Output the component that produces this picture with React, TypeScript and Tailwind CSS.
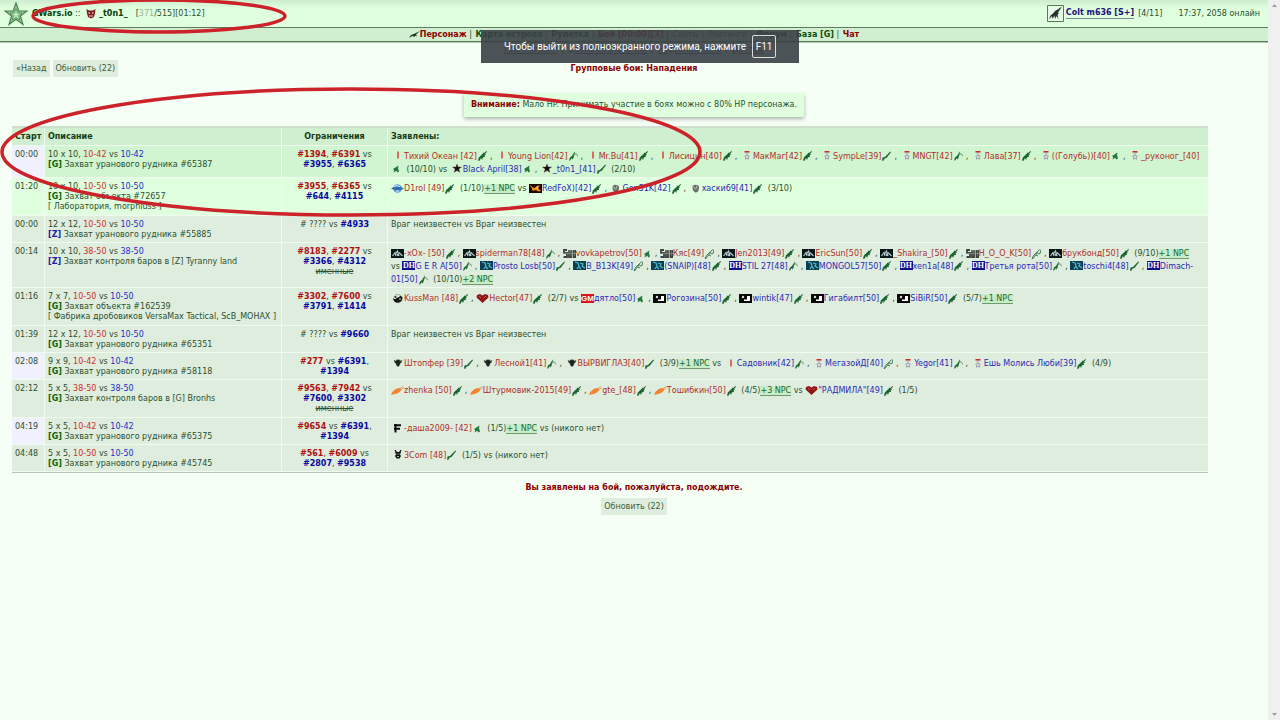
import { Fragment } from 'react';

type Side = 'r' | 'b';
type Player = [side: Side, clan: string, name: string, gun?: string];
type Item = string | Player;

type Battle = {
  time: string;
  soon?: boolean;
  size: string;
  levels: string;
  land: 'G' | 'Z';
  target: string;
  extra?: string;
  limits: string[][];
  named?: boolean;
  lines: Item[][];
  bg: string;
  height?: string;
};

const plain = 'bg-[#dfeddf]';

const battles: Battle[] = [
  {
    time: '00:00', soon: true, size: '10 x 10', levels: '10-42', land: 'G', target: 'Захват уранового рудника #65387',
    limits: [['r#1394', ', ', 'r#6391', ' vs'], ['b#3955', ', ', 'b#6365']],
    bg: 'bg-[#d0f5d0]',
    lines: [
      [
        ['r', 'bar', 'Тихий Океан [42]', 'rifle'], ['r', 'bar', 'Young Lion[42]', 'mg'], ['r', 'bar', 'Mr.Bu[41]', 'rifle'],
        ['r', 'bar', 'Лисицин[40]', 'rifle'], ['r', 'medal', 'МакМаг[42]', 'rifle'], ['r', 'medal', 'SympLe[39]', 'tube'],
        ['r', 'medal', 'MNGT[42]', 'mg'], ['r', 'medal', 'Лава[37]', 'rifle'], ['r', 'medal', '((Голубь))[40]', 'smg'],
        ['r', 'medal', '_руконог_[40]'],
      ],
      [['r', '', '', 'smg'], '(10/10) vs ', ['b', 'star', 'Black April[38]', 'smg'], ['b', 'star', '_t0n1_[41]', 'tube'], '(2/10)'],
    ],
  },
  {
    time: '01:20', size: '10 x 10', levels: '10-50', land: 'G', target: 'Захват объекта #72657', extra: '[ Лаборатория, morphiuss ]',
    limits: [['r#3955', ', ', 'r#6365', ' vs'], ['b#644', ', ', 'b#4115']],
    bg: 'bg-[#dfffdf]', height: 'h-[38px]',
    lines: [[
      ['r', 'globe', 'D1rol [49]', 'rifle'], '(1/10)', '+1 NPC', ' vs ', ['b', 'fire', 'RedFoX)[42]', 'rifle'],
      ['b', 'stone', 'Gen51K[42]', 'rifle'], ['b', 'stone', 'хаски69[41]', 'rifle'], '(3/10)',
    ]],
  },
  {
    time: '00:00', size: '12 x 12', levels: '10-50', land: 'Z', target: 'Захват уранового рудника #55885',
    limits: [['# ???? vs ', 'b#4933']],
    bg: plain,
    lines: [],
  },
  {
    time: '00:14', size: '10 x 10', levels: '38-50', land: 'Z', target: 'Захват контроля баров в [Z] Tyranny land',
    limits: [['r#8183', ', ', 'r#2277', ' vs'], ['b#3366', ', ', 'b#4312']], named: true,
    bg: plain,
    lines: [
      [
        ['r', 'wolf', '-xOx- [50]', 'rifle'], ['r', 'wolf', 'spiderman78[48]', 'mg'], ['r', 'su', 'vovkapetrov[50]', 'smg'],
        ['r', 'su', 'Кяс[49]', 'flamer'], ['r', 'wolf', 'Jen2013[49]', 'rifle'], ['r', 'wolf', 'EricSun[50]', 'rifle'],
        ['r', 'wolf', '_Shakira_[50]', 'rifle'], ['r', 'su', 'H_O_O_K[50]', 'flamer'], ['r', 'wolf', 'брукбонд[50]', 'rifle'],
        '(9/10)', '+1 NPC',
      ],
      [
        'vs ', ['b', 'dh', 'G E R A[50]', 'mg'], ['b', 'teal', 'Prosto Losb[50]', 'tube'], ['b', 'teal', 'B_B13K[49]', 'flamer'],
        ['b', 'teal', '(SNAIP)[48]', 'rifle'], ['b', 'dh', 'STIL 27[48]', 'mg'], ['b', 'teal', 'MONGOL57[50]', 'rifle'],
        ['b', 'dh', 'xen1a[48]', 'rifle'], ['b', 'dh', 'Третья рота[50]', 'mg'], ['b', 'teal', 'toschi4[48]', 'tube'],
        ['b', 'dh', 'Dimach-'],
      ],
      [['b', '', '01[50]', 'mg'], '(10/10)', '+2 NPC'],
    ],
  },
  {
    time: '01:16', size: '7 x 7', levels: '10-50', land: 'G', target: 'Захват объекта #162539',
    extra: '[ Фабрика дробовиков VersaMax Tactical, ScB_MOHAX ]',
    limits: [['r#3302', ', ', 'r#7600', ' vs'], ['b#3791', ', ', 'b#1414']],
    bg: plain, height: 'h-[38px]',
    lines: [[
      ['r', 'yin', 'KussMan [48]', 'rifle'], ['r', 'heart', 'Hector[47]', 'rifle'], '(2/7) vs ', ['b', 'gm', 'дятло[50]', 'smg'],
      ['b', 'moon', 'Рогозина[50]', 'rifle'], ['b', 'moon', 'wintik[47]', 'rifle'], ['b', 'moon', 'Гигабилт[50]', 'rifle'],
      ['b', 'moon', 'SiBiR[50]', 'rifle'], '(5/7)', '+1 NPC',
    ]],
  },
  {
    time: '01:39', size: '12 x 12', levels: '10-50', land: 'G', target: 'Захват уранового рудника #65351',
    limits: [['# ???? vs ', 'b#9660']],
    bg: plain,
    lines: [],
  },
  {
    time: '02:08', soon: true, size: '9 x 9', levels: '10-42', land: 'G', target: 'Захват уранового рудника #58118',
    limits: [['r#277', ' vs ', 'b#6391', ','], ['b#1394']],
    bg: plain,
    lines: [[
      ['r', 'mask', 'Штопфер [39]', 'tube'], ['r', 'mask', 'Лесной1[41]', 'mg'], ['r', 'mask', 'ВЫРВИГЛАЗ[40]', 'tube'],
      '(3/9)', '+1 NPC', ' vs ', ['b', 'bar', 'Садовник[42]', 'mg'], ['b', 'medal', 'МегазойД[40]', 'flamer'],
      ['b', 'medal', 'Yegor[41]', 'mg'], ['b', 'medal', 'Ешь Молись Люби[39]', 'rifle'], '(4/9)',
    ]],
  },
  {
    time: '02:12', size: '5 x 5', levels: '38-50', land: 'G', target: 'Захват контроля баров в [G] Bronhs',
    limits: [['r#9563', ', ', 'r#7942', ' vs'], ['b#7600', ', ', 'b#3302']], named: true,
    bg: plain, height: 'h-[38px]',
    lines: [[
      ['r', 'carrot', 'zhenka [50]', 'rifle'], ['r', 'carrot', 'Штурмовик-2015[49]', 'rifle'], ['r', 'carrot', 'gte_[48]', 'rifle'],
      ['r', 'carrot', 'Тошибкин[50]', 'rifle'], '(4/5)', '+3 NPC', ' vs ', ['b', 'heart', '"РАДМИЛА"[49]', 'rifle'], '(1/5)',
    ]],
  },
  {
    time: '04:19', soon: true, size: '5 x 5', levels: '10-42', land: 'G', target: 'Захват уранового рудника #65375',
    limits: [['r#9654', ' vs ', 'b#6391', ','], ['b#1394']],
    bg: plain,
    lines: [[['r', 'flag', '-даша2009- [42]', 'smg'], '(1/5)', '+1 NPC', ' vs (никого нет)']],
  },
  {
    time: '04:48', size: '5 x 5', levels: '10-50', land: 'G', target: 'Захват уранового рудника #45745',
    limits: [['r#561', ', ', 'r#6009', ' vs'], ['b#2807', ', ', 'b#9538']],
    bg: plain,
    lines: [[['r', 'skull', '3Com [48]', 'tube'], '(1/5) vs (никого нет)']],
  },
];

const clanArt: Record<string, React.ReactNode> = {
  bar: <path d="M7 .5v7" stroke="#e23b3b" strokeWidth="1.500" />,
  medal: (
    <>
      <path d="M4.500.8h5" stroke="#c22" strokeWidth="1.500" />
      <path d="M5.500 2.300h3" stroke="#aab" strokeWidth=".8" />
      <path d="M7 3.400l.6 1.500 1.900.2-1.300 1.200.4 1.900L7 7.300l-1.600.9.4-1.900-1.300-1.200 1.900-.2z" fill="#e6e0ec" stroke="#778" strokeWidth=".6" />
    </>
  ),
  star: (
    <path d="M7 0l1.100 3h3.400L8.800 5l1 3.300L7 6.500 4.200 8.300l1-3.300L2.500 3h3.400z" fill="#111" stroke="#633" strokeWidth=".4" />
  ),
  globe: (
    <>
      <ellipse cx="6.500" cy="4.500" rx="4.500" ry="4.200" fill="#5aa2da" />
      <path d="M0 4.500c3-2.500 9-2.500 13 0-3 2-9 2-13 0z" fill="#2f6cab" />
      <path d="M3 2.800c2-1.500 5-1 6 0M5 7h3" stroke="#d8ecf9" fill="none" />
    </>
  ),
  fire: (
    <>
      <path d="M0 0h13v9H0z" fill="#160800" />
      <path d="M1 1c2 1 3 3 5 3 1-2 3-3 5-2l-2 2 3 3c-3 1-4 0-5-1-2 1-4 1-4-1S1 3 1 1z" fill="#f08a1c" />
      <path d="M6 4l3-1 0 2z" fill="#ffd84a" />
    </>
  ),
  stone: (
    <>
      <path d="M3.500 3c0-3 6.500-3 6.500 0 0 3-1 5.500-3 5.500S3.500 6 3.500 3z" fill="#667066" />
      <path d="M4.500 2.500l2 3M8 1.500L7 5" stroke="#b9c2b9" />
    </>
  ),
  wolf: (
    <>
      <path d="M0 0h13v9H0z" fill="#081616" />
      <path d="M1.500 7L4 3.500 5 7M5 4.500L6.500 2l1.500 5M8 3.500L11.500 7M6 5l1 2" fill="none" stroke="#b4caca" strokeWidth="1.200" />
    </>
  ),
  su: (
    <>
      <path d="M4 1H1v3h3v4H.5M6 1v7h2V1M10.500 1v7h2V1" fill="none" stroke="#3f443f" strokeWidth="1.800" />
      <path d="M0 4.500h13M5 2h5" stroke="#8b938b" strokeWidth=".8" />
    </>
  ),
  teal: (
    <>
      <path d="M0 0h13v9H0z" fill="#0d3f52" />
      <path d="M2 1l3 1 1 3-2 3M7 2l3 1-1 2 3 2M6 6l2 2" fill="none" stroke="#4cb9c8" strokeWidth="1.300" />
    </>
  ),
  yin: (
    <>
      <path d="M2 3.500c0 7 9.500 7 9.500 0-.5-1-1.500-1.500-2.500-1.500C8 4 6 3 5 4.500 4 5.500 2.500 5 2 3.500z" fill="#151515" />
      <path d="M3 3c1-3 6-3.300 7.500-.5" stroke="#777" fill="none" strokeWidth=".7" />
      <circle cx="4.500" cy="3" r="1" fill="#222" />
      <circle cx="9" cy="5" r=".8" fill="#eee" />
    </>
  ),
  heart: (
    <>
      <path d="M6.500 9L.5 3.500 1 1l3-1 2.500 1.500L9 0l3 1 .5 2.500z" fill="#8e1717" />
      <path d="M3 2l2 2M10 2L8 4" stroke="#d85050" />
    </>
  ),
  moon: (
    <>
      <path d="M0 0h13v9H0z" fill="#080808" />
      <path d="M8 2h3v5H5V5.500h3z" fill="#fff" />
      <circle cx="4" cy="3" r="1.200" fill="#ddd" />
    </>
  ),
  mask: (
    <path d="M3 1l1.800 1L5.500.8h3L9.200 2 11 1l-.6 2.500-1.200.8-.7 2.200L7 7.800 5.500 6.500 4.800 4.300l-1.200-.8z" fill="#1a241a" stroke="#6b7b6b" strokeWidth=".4" />
  ),
  carrot: (
    <>
      <path d="M0 8.500c1-3 4.500-6.500 9-6.500l1.500 1.500C9 6.500 5 8.500 0 8.500z" fill="#f5822c" />
      <path d="M9 2.500l3-2M10 3.500l3-2" stroke="#d0a070" strokeWidth=".8" />
    </>
  ),
  flag: <path d="M3 1.200h7M3 4.700h6M4.500 0v8.500" stroke="#0c0c0c" strokeWidth="2" fill="none" />,
  skull: (
    <>
      <path d="M4 0l1.500 2.500M10 0L8.500 2.500" stroke="#111" strokeWidth="1.300" />
      <path d="M4 2h6L9 4.500l1 1.500-1.500 2.500h-3L4 6l1-1.500z" fill="#111" />
      <path d="M5.500 4h1M7.500 4h1M6 6.500h2" stroke="#dfeddf" strokeWidth=".8" />
    </>
  ),
};

const gunArt: Record<string, React.ReactNode> = {
  rifle: <path d="M1 9.800l.8-3.300 2-2L5.500 3l1-1.500L7.200 2 9.500 0l.5.700-2 2.300 1 .6-1.500 1 .5 1.400-2 .3L5 9 4 7 2.500 9.800z" fill="#1b6630" />,
  mg: (
    <>
      <path d="M1 9.500l1-3L4 5l2.800-4.500.2.500-1 4L4.800 8.800 4 7 2 9.500z" fill="#1b6630" />
      <path d="M5.500 4.500L8 2.500 10 5.500" stroke="#5d9068" fill="none" strokeWidth=".9" />
    </>
  ),
  tube: <path d="M1 9.800l.5-3.300L4 6l5.300-5.500.7.800L5.500 7 3.700 7.500 2.300 9.800z" fill="#1b6630" />,
  smg: <path d="M2 5l5.500-3.500L7 4l1 3.500-1.700 1L5.300 6.800 2.500 8.500l.7-2.300z" fill="#267a3c" />,
  flamer: (
    <path d="M1 9.500l2-3.500L8.500.8 10 1.500 9 4.500l-1.500.5-1-1.500L3.500 7.500 2 9.500zM5 6l2 1" fill="none" stroke="#41794e" strokeWidth="1" />
  ),
};

function ClanIcon({ clan }: { clan: string }) {
  if (clan === 'dh' || clan === 'gm') {
    return (
      <span
        className={`inline-block w-[13px] h-[9px] overflow-hidden align-bottom mb-[3px] text-center font-bold text-[8px] leading-[9px] text-white ${
          clan === 'dh' ? "bg-[#10108c] font-['Liberation_Serif',serif]" : "bg-[#d81818] font-['Liberation_Sans',sans-serif]"
        }`}
      >
        {clan.toUpperCase()}
      </span>
    );
  }
  return (
    <svg viewBox="0 0 13 9" className="inline-block w-[13px] h-[9px] align-bottom mb-[3px]">
      {clanArt[clan]}
    </svg>
  );
}

function Line({ items }: { items: Item[] }) {
  return (
    <div className="h-[13px]">
      {items.map((item, i) => {
        if (typeof item === 'string') {
          return item.startsWith('+') ? (
            <a key={i} href="#npc" className="bg-[#c8ebc8] text-[#1c6a2c] border-b border-[#6f9a6f]">{item}</a>
          ) : (
            <Fragment key={i}>{item}</Fragment>
          );
        }
        const [side, clan, name, gun] = item;
        return (
          <Fragment key={i}>
            {clan && <ClanIcon clan={clan} />}
            {name && <a href="#player" className={side === 'r' ? 'text-[#b03028]' : 'text-[#2a2ab4]'}>{name}</a>}
            {gun && (
              <svg viewBox="0 0 10 10" className="inline-block w-[10px] h-[10px] align-bottom mb-[2px] mr-[3px]">{gunArt[gun]}</svg>
            )}
            {gun && (Array.isArray(items[i + 1]) ? ', ' : ' ')}
          </Fragment>
        );
      })}
    </div>
  );
}

const nav = [
  ['Персонаж', 'text-[#8b0000]'],
  ['Карта острова', 'text-[#0a500a]'],
  ['Рулетка', 'text-[#0a500a]'],
  ['Бой [00:00][3]', 'text-[#c00000]'],
  ['Сайты', 'text-[#3c6a3c] font-normal'],
  ['Рейтинги', 'text-[#3c6a3c] font-normal'],
  ['Форум', 'text-[#0a500a]'],
  ['База [G]', 'text-[#0a500a]'],
  ['Чат', 'text-[#8b0000]'],
];

const cell = 'border border-[#f0fbf0] border-l-0 border-t-0 px-[3px] pt-1 align-top';
const button = 'bg-[#dfeddf] text-[#3a613a] h-[17px] px-[3px]';

export default function App() {
  return (
    <div className="relative flex min-h-screen overflow-hidden bg-[#f5fff5] font-['DejaVu_Sans',Verdana,sans-serif] text-[8px] leading-[10px] text-[#2c502c]">
      <div className="flex-1 min-w-0">
        {/* Header */}
        <header className="flex h-[27px] items-center justify-between bg-linear-to-b from-[#cdebcd] to-[#dfffdf] to-30% pl-1 pr-2">
          <div className="flex items-center whitespace-pre">
            <svg viewBox="0 0 24 24" className="w-6 h-6 mr-1">
              <path d="M12 1l2.800 8H23l-6.600 5 2.600 8.500-7-5.200-7 5.200L7.600 14 1 9h8.200z" fill="#8fca8f" stroke="#4d8050" strokeWidth="1.200" />
              <path d="M12 6.500l1.600 4.500h4.400l-3.500 2.700 1.300 4.600-3.800-2.800-3.800 2.800 1.300-4.600L6 11h4.400z" fill="#b9e6b9" stroke="#5c9460" strokeWidth=".9" />
            </svg>
            <a href="#home" className="font-bold text-[#0a400a]">GWars.io</a>
            <span> :: </span>
            <svg viewBox="0 0 10 10" className="w-[10px] h-[10px] mx-[3px]">
              <path d="M.5 0L3 1.500h4L9.500 0 9 4.500 8 8 5 9.500 2 8 1 4.500z" fill="#7e1c1c" />
              <path d="M2.500 3.500l1.500 1M7.500 3.500l-1.500 1M3 7h4" stroke="#f4caca" strokeWidth="1.200" />
            </svg>
            <a href="#me" className="mr-[3px] font-bold text-[#0a400a]">_t0n1_</a>
            <span>  [<span className="text-[#9ab29a]">371</span>/515][01:12]</span>
          </div>
          <div className="flex items-center">
            <svg viewBox="0 0 17 17" className="w-[17px] h-[17px] mr-[2px]">
              <path d="M.5.500h16v16H.5z" fill="#e8fbe8" stroke="#587858" />
              <path d="M2 14.500l1.500-4 2.500-2L8 6l2.500-1.500L15 1.500 12 6l-1 2 1 1-1.500.5 1 4.500-2-3-1.500 3-.5-3.500L5.500 14 5 11z" fill="#26362a" />
            </svg>
            <a href="#weapon" className="font-bold text-[#24107c] border-b border-[#7c8c9c]">Colt m636 [S+]</a>
            <span className="ml-1 mr-4">[4/11]</span>
            <span>17:37, 2058 онлайн</span>
          </div>
        </header>

        {/* Navigation */}
        <nav className="flex h-[15px] items-center justify-center whitespace-pre border-y border-[#5d7d5d] bg-[#d0eed0] font-bold">
          <svg viewBox="0 0 11 8" className="w-[11px] h-2">
            <path d="M0 7l2-3 3-1 6-3-4 3.500 1 2-2-1-1 2-1-2z" fill="#182818" />
          </svg>
          {nav.map(([label, color], i) => (
            <Fragment key={label}>
              {i > 0 && <span className="mr-px font-normal"> | </span>}
              <a href="#nav" className={color}>{label}</a>
            </Fragment>
          ))}
        </nav>
        <div className="flex h-[18px] items-center justify-center gap-1 border-t border-[#b4c8b4] pb-1 text-[#55558c]">
          <a href="#shop" className="underline">Гос. магазин</a>|
          <a href="#board" className="underline">Доска объявлений</a>|
          <a href="#real" className="underline">Недвижимость</a>|
          <a href="#center" className="underline text-[#8c4040]">Центры</a>
        </div>

        {/* Title row */}
        <div className="grid grid-cols-[1fr_auto_1fr] items-center pl-[13px]">
          <div className="flex gap-[3px]">
            <button className={button}>«Назад</button>
            <button className={button}>Обновить (22)</button>
          </div>
          <h1 className="pr-[13px] font-bold text-[#8b0000]">Групповые бои: Нападения</h1>
        </div>

        <div className="mx-auto mt-4 w-fit bg-[#dfffdf] px-[7px] py-[7px] shadow-[0_2px_4px_rgba(0,0,0,0.3)]">
          <b className="text-[#8b0000]">Внимание:</b> Мало HP. Принимать участие в боях можно с 80% HP персонажа.
        </div>

        {/* Battles */}
        <div className="mt-[9px] pl-3 pr-[60px]">
          <table className="w-full table-fixed border-separate border-spacing-0 border-t-2 border-b border-t-[#cde0cd] border-b-[#b4c8b4]">
            <colgroup>
              <col className="w-[33px]" />
              <col className="w-[237px]" />
              <col className="w-[106px]" />
              <col />
            </colgroup>
            <thead>
              <tr className="h-[18px] bg-[#d0eed0] text-left text-[#143c14]">
                <th className="border-b border-r border-[#f0fbf0] px-[3px]">Старт</th>
                <th className="border-b border-r border-[#f0fbf0] px-[3px]">Описание</th>
                <th className="border-b border-r border-[#f0fbf0] px-[3px] text-center">Ограничения</th>
                <th className="border-b border-[#f0fbf0] px-[3px]">Заявлены:</th>
              </tr>
            </thead>
            <tbody>
              {battles.map(b => (
                <tr key={b.time + b.target} className={`${b.bg} ${b.height ?? 'h-[27px]'}`}>
                  <td className={`${cell} ${b.soon ? 'bg-[#f0f0ff]' : ''}`}>{b.time}</td>
                  <td className={`${cell} whitespace-nowrap`}>
                    {b.size}, <span className="text-[#d03028]">{b.levels}</span> vs <span className="text-[#1c30c8]">{b.levels}</span>
                    <br />
                    <b className={b.land === 'G' ? 'text-[#0a640a]' : 'text-[#1c1ca0]'}>[{b.land}]</b> {b.target}
                    {b.extra && <div>{b.extra}</div>}
                  </td>
                  <td className={`${cell} whitespace-pre text-center`}>
                    {b.limits.map((line, i) => (
                      <div key={i}>
                        {line.map((part, j) =>
                          /^[rb]#/.test(part) ? (
                            <a key={j} href="#syndicate" className={`font-bold ${part[0] === 'r' ? 'text-[#b01010]' : 'text-[#0808a0]'}`}>
                              {part.slice(1)}
                            </a>
                          ) : (
                            <Fragment key={j}>{part}</Fragment>
                          )
                        )}
                      </div>
                    ))}
                    {b.named && <s>именные</s>}
                  </td>
                  <td className={`${cell} border-r-0 whitespace-pre ${b.lines.length > 1 ? 'pb-px' : ''}`}>
                    {b.lines.length > 0 ? (
                      <div className="leading-[13px]">
                        {b.lines.map((items, i) => <Line key={i} items={items} />)}
                      </div>
                    ) : (
                      'Враг неизвестен vs Враг неизвестен'
                    )}
                  </td>
                </tr>
              ))}
            </tbody>
          </table>
        </div>

        <div className="mt-[10px] flex flex-col items-center gap-[5px]">
          <p className="font-bold text-[#8b0000]">Вы заявлены на бой, пожалуйста, подождите.</p>
          <button className={button}>Обновить (22)</button>
        </div>
      </div>

      {/* Scrollbar */}
      <div className="flex w-3 shrink-0 flex-col items-center justify-between bg-[#f0f0f0] py-1">
        <svg viewBox="0 0 5 3" className="w-[5px] h-[3px]"><path d="M0 3l2.500-3L5 3z" fill="#a0a0a0" /></svg>
        <svg viewBox="0 0 5 3" className="w-[5px] h-[3px]"><path d="M0 0l2.500 3L5 0z" fill="#a0a0a0" /></svg>
      </div>

      {/* Fullscreen hint */}
      <div className="absolute left-1/2 top-[30px] flex h-[33px] w-[318px] -translate-x-1/2 items-center justify-center gap-[6px] whitespace-nowrap bg-[#3a4045]/90 font-[Roboto,'Noto_Sans',sans-serif] text-[10px] text-white">
        <span>Чтобы выйти из полноэкранного режима, нажмите</span>
        <kbd className="flex h-[23px] w-6 items-center justify-center rounded-xs border border-white/80 font-[Roboto,sans-serif]">F11</kbd>
      </div>

      {/* Red marker */}
      <svg className="pointer-events-none absolute left-0 top-0 h-[220px] w-[710px]" viewBox="0 0 710 220" fill="none" stroke="#cc2229" strokeWidth="3.500">
        <ellipse cx="159" cy="16" rx="126" ry="16" />
        <ellipse cx="351" cy="152" rx="349" ry="63" />
      </svg>
    </div>
  );
}
